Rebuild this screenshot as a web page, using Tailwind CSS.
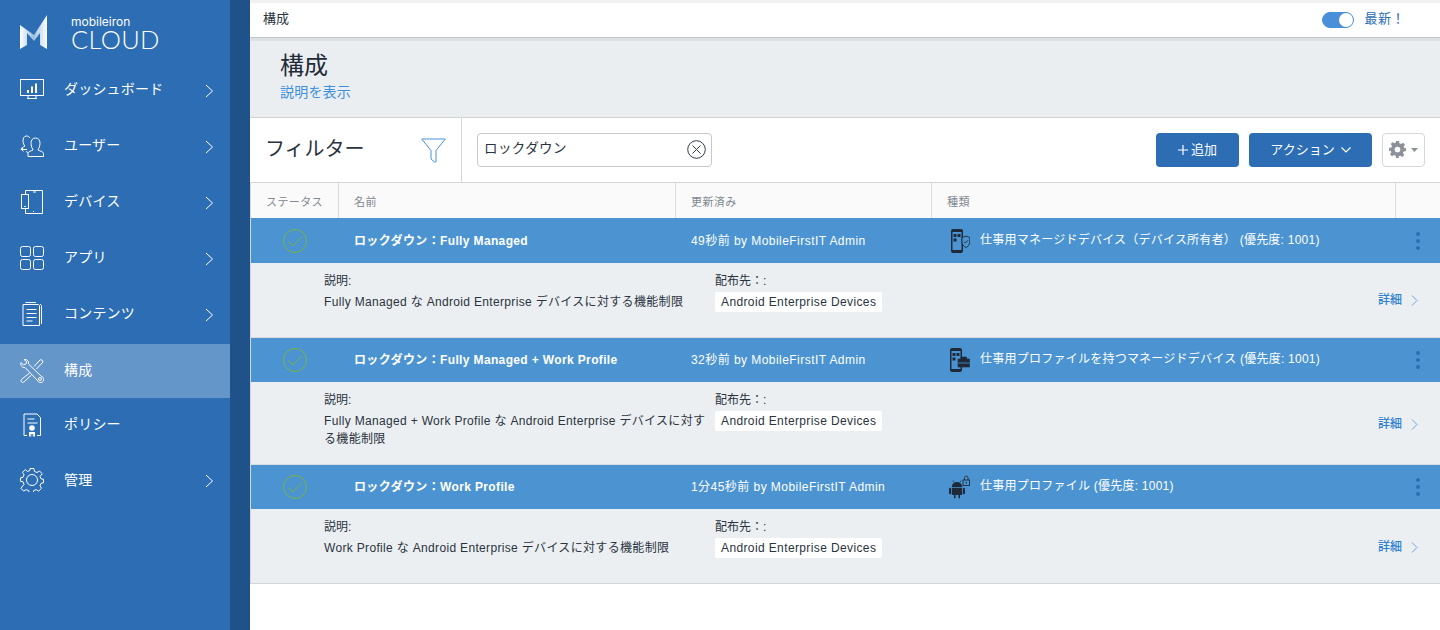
<!DOCTYPE html>
<html lang="ja">
<head>
  <meta charset="UTF-8">
  <title>構成</title>
  <script src="https://cdn.jsdelivr.net/npm/@tailwindcss/browser@4"></script>
</head>
<body class="w-[1440px] h-[630px] overflow-hidden bg-white font-['Liberation_Sans','Noto_Sans_CJK_JP',sans-serif] text-[12px] text-[#2a3340]">
<div class="flex h-[630px]">
  <!-- sidebar -->
  <aside class="w-[230px] h-full bg-[#2c6db4] text-white shrink-0">
    <div class="h-[62px] flex items-start pl-[20px] pt-[15px]">
      <svg width="28" height="34" viewBox="0 0 28 34"><defs><linearGradient id="lg" x1="0" y1="0" x2="1" y2="0"><stop offset="0" stop-color="#ffffff"/><stop offset=".5" stop-color="#9cc0e2"/><stop offset="1" stop-color="#ffffff"/></linearGradient></defs><path d="M0 10 L14 20 L27 0 V34 L20 30 V18 L14 26 L7 18 V30 L0 34 Z" fill="url(#lg)"/></svg>
      <div class="ml-[23px] mt-[1px]">
        <div class="text-[12px] leading-[11px] font-['Inter',sans-serif] font-normal">mobileiron</div>
        <div class="text-[25.500px] leading-[24px] font-['Lato',sans-serif] font-light tracking-[0.3px]">CLOUD</div>
      </div>
    </div>
    <a class="h-[56px] flex items-center pl-[20px]">
      <svg class="w-[24px] h-[24px]" viewBox="0 0 24 24" fill="none" stroke="white" stroke-width="1"><rect x=".5" y="1.500" width="23" height="16"/><path d="M8 18v2M16 18v2M7 20.500h10" /><path d="M7 15v-3h2v3zM11 15V8.500h2V15zM15 15V5.500h2V15z" fill="white" stroke="none"/></svg>
      <span class="ml-[20px] text-[14px] -mt-[1px] tracking-[0.2px]">ダッシュボード</span>
      <svg class="ml-auto mr-[16px] mt-[2px] w-[9px] h-[14px]" viewBox="0 0 9 14" fill="none" stroke="white" stroke-width="1"><path d="M1 1l6.500 6L1 13"/></svg>
    </a>
    <a class="h-[56px] flex items-center pl-[20px]">
      <svg class="w-[24px] h-[24px]" viewBox="0 0 24 24" fill="none" stroke="white" stroke-width="1"><path d="M8 22.500v-3c0-2 3-2.500 5-3.500 0-1-2-2.500-2-6.500 0-3.500 1.500-5.500 4.500-5.500s4.500 2 4.500 5.500c0 4-2 5.500-2 6.500 1.500 1 5.500 1.500 5.500 3.500v3z"/><path d="M10 4C9 2.500 8 2 6.500 2 4 2 3 4.500 3 7c0 2.500 1 4 2 5-1 1-4 1.500-4 3.500H7M3 14l-1.500 1.500L3.500 17.500M6 17.500l2 1"/></svg>
      <span class="ml-[20px] text-[14px] -mt-[1px] tracking-[0.2px]">ユーザー</span>
      <svg class="ml-auto mr-[16px] mt-[2px] w-[9px] h-[14px]" viewBox="0 0 9 14" fill="none" stroke="white" stroke-width="1"><path d="M1 1l6.500 6L1 13"/></svg>
    </a>
    <a class="h-[56px] flex items-center pl-[20px]">
      <svg class="w-[24px] h-[24px]" viewBox="0 0 24 24" fill="none" stroke="white" stroke-width="1"><path d="M5.500 4.500V.500h17v23h-17v-5"/><rect x="1.500" y="4.500" width="7" height="14"/><path d="M13 2h3M13 21.500h1M4 16.500h2"/></svg>
      <span class="ml-[20px] text-[14px] -mt-[1px] tracking-[0.2px]">デバイス</span>
      <svg class="ml-auto mr-[16px] mt-[2px] w-[9px] h-[14px]" viewBox="0 0 9 14" fill="none" stroke="white" stroke-width="1"><path d="M1 1l6.500 6L1 13"/></svg>
    </a>
    <a class="h-[56px] flex items-center pl-[20px]">
      <svg class="w-[24px] h-[24px]" viewBox="0 0 24 24" fill="none" stroke="white" stroke-width="1"><rect x=".5" y=".5" width="10" height="10" rx="2"/><rect x="13.500" y=".5" width="10" height="10" rx="2"/><rect x=".5" y="13.500" width="10" height="10" rx="2"/><rect x="13.500" y="13.500" width="10" height="10" rx="2"/></svg>
      <span class="ml-[20px] text-[14px] -mt-[1px] tracking-[0.2px]">アプリ</span>
      <svg class="ml-auto mr-[16px] mt-[2px] w-[9px] h-[14px]" viewBox="0 0 9 14" fill="none" stroke="white" stroke-width="1"><path d="M1 1l6.500 6L1 13"/></svg>
    </a>
    <a class="h-[56px] flex items-center pl-[20px]">
      <svg class="w-[24px] h-[24px]" viewBox="0 0 24 24" fill="none" stroke="white" stroke-width="1"><path d="M3 2.500h15.500l1 1V23.500H3zM16 .5H5.500M20 2l1.500 1.500V22"/><path d="M6.500 7.500h10M6.500 11.500h10M6.500 15.500h10M6.500 19h6"/></svg>
      <span class="ml-[20px] text-[14px] -mt-[1px] tracking-[0.2px]">コンテンツ</span>
      <svg class="ml-auto mr-[16px] mt-[2px] w-[9px] h-[14px]" viewBox="0 0 9 14" fill="none" stroke="white" stroke-width="1"><path d="M1 1l6.500 6L1 13"/></svg>
    </a>
    <a class="mt-[2px] h-[54px] flex items-center pl-[20px] bg-[#6596ca]">
      <svg class="w-[24px] h-[24px]" viewBox="0 0 24 24" fill="none" stroke="white" stroke-width="1"><path d="M1 3.500 L3.500 6 L6 5 L6.500 2.500 L4 .5 C7 0 9 2 8.500 5 L21.500 17.500 C24 18 24 21 23 22.500 C21.500 24 18.500 24 17.500 21.500 L5 8.500 C2.500 9 0 6.500 1 3.500Z"/><path d="M14 7.500 L20 1 C21 0 23 1.500 23 3 L16.500 10"/><path d="M9.500 14 L2 20 C1 21 .5 22.500 1.500 23 C3 24 4 23 5 22 L11.500 16"/><circle cx="20" cy="20" r="1.500"/></svg>
      <span class="ml-[20px] text-[14px] -mt-[1px] tracking-[0.2px]">構成</span>
    </a>
    <a class="h-[54px] flex items-center pl-[20px]">
      <svg class="w-[24px] h-[24px]" viewBox="0 0 24 24" fill="none" stroke="white" stroke-width="1"><path d="M7 22.500H4V1h13l3.500 3.500v18H17"/><path d="M7.500 6h7M7.500 10h10"/><circle cx="12" cy="15" r="2.800" fill="white" stroke="none"/><path d="M9 23.500v-4.500h6v4.500h-1.800v-2.500h-1v2.500h-.5v-2.500h-1v2.500z" fill="white" stroke="none"/></svg>
      <span class="ml-[20px] text-[14px] -mt-[1px] tracking-[0.2px]">ポリシー</span>
    </a>
    <a class="h-[56px] flex items-center pl-[20px]">
      <svg class="w-[24px] h-[24px]" viewBox="0 0 24 24" fill="none" stroke="white" stroke-width="1"><circle cx="12" cy="12" r="5.500"/><path d="M10 .5h4l.5 3 2.500 1 2.500-1.500 2.800 2.800L20 8.300l1 2.500 2.500.5v3.500l-2.500.500-1 2.500 1.500 2.500-2.800 2.800-2.500-1.500-2.500 1-.5 2.500h-4l-.5-2.500-2.500-1-2.500 1.500-2.800-2.800L4 16.300l-1-2.500-2.500-.5v-3.500l2.500-.5 1-2.500-1.500-2.500 2.800-2.800L7.300 3.500l2.500-1z"/></svg>
      <span class="ml-[20px] text-[14px] mt-[1px] tracking-[0.2px]">管理</span>
      <svg class="ml-auto mr-[16px] mt-[2px] w-[9px] h-[14px]" viewBox="0 0 9 14" fill="none" stroke="white" stroke-width="1"><path d="M1 1l6.500 6L1 13"/></svg>
    </a>
  </aside>
  <div class="w-[20px] h-full bg-[#1f5288] shrink-0"></div>

  <!-- main -->
  <main class="flex-1 min-w-0 h-full flex flex-col">
    <div class="h-[3px] bg-[#f1f1f1]"></div>
    <div class="h-[35px] bg-white border-b border-[#c4c6c8] flex items-center pl-[13px] pr-[35px] text-[13px]">
      <span class="-mt-[2px]">構成</span>
      <span class="ml-auto w-[32px] h-[16px] rounded-full bg-[#4a90d9] border border-[#4a90d9] flex justify-end -mt-[1px]"><span class="w-[14px] h-[14px] rounded-full bg-white"></span></span>
      <span class="ml-[10px] text-[#2c6db4] -mt-[2px] tracking-[0.5px]">最新！</span>
    </div>
    <div class="h-[80px] bg-[#ebeef1] border-t-[3px] border-t-[#dde0e3] border-b border-b-[#d0d3d6] pl-[30px] pt-[10px]">
      <h1 class="text-[24px] leading-[30px] text-[#222b38]">構成</h1>
      <a class="block text-[14px] leading-[20px] mt-[1px] tracking-[0.2px] text-[#3f90dc]">説明を表示</a>
    </div>
    <div class="h-[65px] flex items-center border-b border-[#d4d6d8] bg-white">
      <div class="w-[212px] h-full border-r border-[#d4d6d8] flex items-center pl-[15px] pr-[15px] shrink-0">
        <span class="text-[20px] -mt-[3px]">フィルター</span>
        <svg class="ml-auto w-[25px] h-[25px]" viewBox="0 0 25 25" fill="none" stroke="#4a90d9" stroke-width="1"><path d="M.7 1h23.600L15 12.500V24h-1.500L10 21V12.500z"/></svg>
      </div>
      <div class="ml-[15px] w-[235px] h-[34px] rounded-[4px] border border-[#c5c9cd] flex items-center pl-[6px] pr-[5px] text-[13.500px] tracking-[0.4px] -mt-[1px]">
        <span>ロックダウン</span>
        <svg class="ml-auto w-[19px] h-[19px]" viewBox="0 0 19 19" fill="none" stroke="#333c48" stroke-width="1"><circle cx="9.500" cy="9.500" r="8.800"/><path d="M5.500 5.500l8 8M13.500 5.500l-8 8"/></svg>
      </div>
      <div class="ml-auto flex items-center gap-[10px] pr-[15px] -mt-[1px]">
        <button class="w-[83px] h-[34px] rounded-[4px] bg-[#2c6db4] text-white text-[13px] flex items-center justify-center"><svg class="mr-[3px] w-[10px] h-[10px]" viewBox="0 0 10 10" fill="none" stroke="white" stroke-width="1.200"><path d="M5 0v10M0 5h10"/></svg>追加</button>
        <button class="w-[123px] h-[34px] rounded-[4px] bg-[#2c6db4] text-white text-[13px] flex items-center justify-center">アクション<svg class="ml-[6px] w-[10px] h-[6px]" viewBox="0 0 10 6" fill="none" stroke="white" stroke-width="1.200"><path d="M.5.5l4.500 4.500L9.500.5"/></svg></button>
        <button class="w-[43px] h-[34px] rounded-[4px] border border-[#d4d8dc] bg-white flex items-center pl-[6px]">
          <svg class="w-[17px] h-[17px]" viewBox="0 0 24 24" fill="#8b9198"><path fill-rule="evenodd" d="M10 0h4l.7 3.300 2.300 1 2.800-1.900 2.800 2.800-1.900 2.800 1 2.300L24 10v4l-3.300.7-1 2.300 1.900 2.800-2.800 2.800-2.800-1.900-2.300 1L14 24h-4l-.7-3.300-2.300-1-2.800 1.900-2.800-2.800 1.900-2.800-1-2.300L0 14v-4l3.300-.7 1-2.300-1.900-2.800 2.800-2.800L7 3.300l2.300-1zM12 8a4 4 0 1 0 0 8 4 4 0 0 0 0-8z"/></svg>
          <svg class="ml-[5px] w-[7px] h-[4px]" viewBox="0 0 7 4" fill="#8b9198"><path d="M0 0h7L3.500 4z"/></svg>
        </button>
      </div>
    </div>

    <!-- table head -->
    <div class="h-[36px] grid grid-cols-[88px_337px_256px_464px_45px] bg-[#fafafa] border-b border-b-[#4b94d1] border-l border-l-[#d4d6d8] text-[11px] text-[#808890] tracking-[0.4px]">
      <div class="border-r border-[#d9dbdd] flex items-center pl-[15px]"><span class="mt-[3px]">ステータス</span></div>
      <div class="border-r border-[#d9dbdd] flex items-center pl-[15px]"><span class="mt-[3px]">名前</span></div>
      <div class="border-r border-[#d9dbdd] flex items-center pl-[15px]"><span class="mt-[3px]">更新済み</span></div>
      <div class="border-r border-[#d9dbdd] flex items-center pl-[15px]"><span class="mt-[3px]">種類</span></div>
      <div></div>
    </div>

    <div class="border-l border-[#d4d6d8]">
      <!-- row 1 -->
      <div class="h-[44px] bg-[#4b94d1] text-white grid grid-cols-[88px_337px_256px_509px] items-center">
        <div class="pl-[32px]"><svg class="w-[24px] h-[24px]" viewBox="0 0 24 24" fill="none" stroke="#7cb342" stroke-width="1"><circle cx="12" cy="12" r="11.500"/><path d="M5.500 12.500l4.500 4.500 9-9.500"/></svg></div>
        <div class="pl-[15px] font-bold tracking-[0.36px]">ロックダウン：Fully Managed</div>
        <div class="pl-[15px] tracking-[0.45px]">49秒前 by MobileFirstIT Admin</div>
        <div class="flex items-center pl-[18px] pr-[21px]">
          <svg class="w-[20px] h-[24px] shrink-0" viewBox="0 0 20 24"><rect x="1" y="0" width="12" height="24" rx="2" fill="#1e2a3a"/><rect x="2.500" y="3" width="9" height="18" fill="#4b94d1"/><path d="M3.500 5h3v3h-3zM7.500 5h3v3h-3zM3.500 9.500h3v3h-3z" fill="#1e2a3a"/><path d="M12 8.500l4 -1.300 3.800 1.300v4.500c0 3-2.300 4.800-3.800 5.500-1.500-.7-4-2.500-4-5.500z" fill="#4b94d1" stroke="#1e2a3a" stroke-width=".9"/><path d="M14 12.500l1.500 1.500 2.500-2.800" fill="none" stroke="#1e2a3a" stroke-width=".9"/></svg>
          <span class="ml-[10px] -mt-[2px] tracking-[0.24px]">仕事用マネージドデバイス（デバイス所有者） (優先度: 1001)</span>
          <span class="ml-auto flex flex-col gap-[3px]"><i class="block w-[4px] h-[4px] rounded-full bg-[#2c6db4]"></i><i class="block w-[4px] h-[4px] rounded-full bg-[#2c6db4]"></i><i class="block w-[4px] h-[4px] rounded-full bg-[#2c6db4]"></i></span>
        </div>
      </div>
      <div class="h-[75px] bg-[#ecEff2] border-b border-[#d9dbdd] grid grid-cols-[464px_1fr_auto] pl-[73px] pr-[22px] pt-[9px]">
        <div class="pr-[20px]"><div class="leading-[18px]">説明:</div><p class="mt-[4px] leading-[17px] tracking-[0.33px]">Fully Managed な Android Enterprise デバイスに対する機能制限</p></div>
        <div class="-ml-[73px]"><div class="leading-[18px]">配布先：:</div><span class="inline-block mt-[2px] h-[20px] leading-[20px] px-[6px] rounded-[2px] bg-white tracking-[0.38px]">Android Enterprise Devices</span></div>
        <a class="flex items-center self-start mt-[19px] text-[#2f80cf] font-medium">詳細<svg class="ml-[9px] w-[7px] h-[11px]" viewBox="0 0 7 11" fill="none" stroke="#6ba5de" stroke-width="1"><path d="M1 .5l5 5-5 5"/></svg></a>
      </div>
      <!-- row 2 -->
      <div class="h-[44px] bg-[#4b94d1] text-white grid grid-cols-[88px_337px_256px_509px] items-center">
        <div class="pl-[32px]"><svg class="w-[24px] h-[24px]" viewBox="0 0 24 24" fill="none" stroke="#7cb342" stroke-width="1"><circle cx="12" cy="12" r="11.500"/><path d="M5.500 12.500l4.500 4.500 9-9.500"/></svg></div>
        <div class="pl-[15px] font-bold tracking-[0.36px]">ロックダウン：Fully Managed + Work Profile</div>
        <div class="pl-[15px] tracking-[0.45px]">32秒前 by MobileFirstIT Admin</div>
        <div class="flex items-center pl-[18px] pr-[21px]">
          <svg class="w-[20px] h-[24px] shrink-0" viewBox="0 0 20 24"><rect x="0" y="0" width="12" height="24" rx="2" fill="#1e2a3a"/><rect x="1.500" y="3" width="9" height="18" fill="#4b94d1"/><path d="M2.500 5h3v3h-3zM6.500 5h3v3h-3zM2.500 9.500h3v3h-3z" fill="#1e2a3a"/><path d="M8 11h11.500v8H8z M11 11V9h5.500v2" fill="#1e2a3a" stroke="#1e2a3a" stroke-width=".6"/><path d="M8 15h11.500" stroke="#4b94d1" stroke-width=".8"/></svg>
          <span class="ml-[10px] -mt-[2px] tracking-[0.24px]">仕事用プロファイルを持つマネージドデバイス (優先度: 1001)</span>
          <span class="ml-auto flex flex-col gap-[3px]"><i class="block w-[4px] h-[4px] rounded-full bg-[#2c6db4]"></i><i class="block w-[4px] h-[4px] rounded-full bg-[#2c6db4]"></i><i class="block w-[4px] h-[4px] rounded-full bg-[#2c6db4]"></i></span>
        </div>
      </div>
      <div class="h-[83px] bg-[#ecEff2] border-b border-[#d9dbdd] grid grid-cols-[464px_1fr_auto] pl-[73px] pr-[22px] pt-[9px]">
        <div class="pr-[20px] w-[408px]"><div class="leading-[18px]">説明:</div><p class="mt-[4px] leading-[17.500px] tracking-[0.33px]">Fully Managed + Work Profile な Android Enterprise デバイスに対する機能制限</p></div>
        <div class="-ml-[73px]"><div class="leading-[18px]">配布先：:</div><span class="inline-block mt-[2px] h-[20px] leading-[20px] px-[6px] rounded-[2px] bg-white tracking-[0.38px]">Android Enterprise Devices</span></div>
        <a class="flex items-center self-start mt-[24px] text-[#2f80cf] font-medium">詳細<svg class="ml-[9px] w-[7px] h-[11px]" viewBox="0 0 7 11" fill="none" stroke="#6ba5de" stroke-width="1"><path d="M1 .5l5 5-5 5"/></svg></a>
      </div>
      <!-- row 3 -->
      <div class="h-[44px] bg-[#4b94d1] text-white grid grid-cols-[88px_337px_256px_509px] items-center">
        <div class="pl-[32px]"><svg class="w-[24px] h-[24px]" viewBox="0 0 24 24" fill="none" stroke="#7cb342" stroke-width="1"><circle cx="12" cy="12" r="11.500"/><path d="M5.500 12.500l4.500 4.500 9-9.500"/></svg></div>
        <div class="pl-[15px] font-bold tracking-[0.36px]">ロックダウン：Work Profile</div>
        <div class="pl-[15px] tracking-[0.45px]">1分45秒前 by MobileFirstIT Admin</div>
        <div class="flex items-center pl-[17px] pr-[21px]">
          <svg class="w-[21px] h-[24px] shrink-0" viewBox="0 0 21 24"><path d="M2.800 12a5.200 5 0 0 1 10.400 0z" fill="#1e2a3a"/><path d="M5 7.500L4 5.500M11 7.500l1-2" stroke="#1e2a3a" stroke-width=".7"/><path d="M2.800 12.800h10.400v7.200H11v3.300H9.500V20h-3v3.300H5V20H2.800z" fill="#1e2a3a"/><rect x="0" y="12.800" width="2" height="6.500" rx="1" fill="#1e2a3a"/><rect x="14" y="12.800" width="2" height="6.500" rx="1" fill="#1e2a3a"/><rect x="14" y="5" width="6.500" height="5.500" fill="none" stroke="#1e2a3a" stroke-width=".9"/><path d="M15.500 5V2.500a1.800 1.800 0 0 1 3.500 0V5" fill="none" stroke="#1e2a3a" stroke-width=".9"/><path d="M17.200 6.800v2" stroke="#1e2a3a"/></svg>
          <span class="ml-[10px] tracking-[0.24px] -mt-[2px]">仕事用プロファイル (優先度: 1001)</span>
          <span class="ml-auto flex flex-col gap-[3px]"><i class="block w-[4px] h-[4px] rounded-full bg-[#2c6db4]"></i><i class="block w-[4px] h-[4px] rounded-full bg-[#2c6db4]"></i><i class="block w-[4px] h-[4px] rounded-full bg-[#2c6db4]"></i></span>
        </div>
      </div>
      <div class="h-[75px] bg-[#ecEff2] border-b border-[#d4d6d8] grid grid-cols-[464px_1fr_auto] pl-[73px] pr-[22px] pt-[9px]">
        <div class="pr-[20px]"><div class="leading-[18px]">説明:</div><p class="mt-[4px] leading-[17px] tracking-[0.33px]">Work Profile な Android Enterprise デバイスに対する機能制限</p></div>
        <div class="-ml-[73px]"><div class="leading-[18px]">配布先：:</div><span class="inline-block mt-[2px] h-[20px] leading-[20px] px-[6px] rounded-[2px] bg-white tracking-[0.38px]">Android Enterprise Devices</span></div>
        <a class="flex items-center self-start mt-[20px] text-[#2f80cf] font-medium">詳細<svg class="ml-[9px] w-[7px] h-[11px]" viewBox="0 0 7 11" fill="none" stroke="#6ba5de" stroke-width="1"><path d="M1 .5l5 5-5 5"/></svg></a>
      </div>
    </div>
  </main>
</div>
</body>
</html>
